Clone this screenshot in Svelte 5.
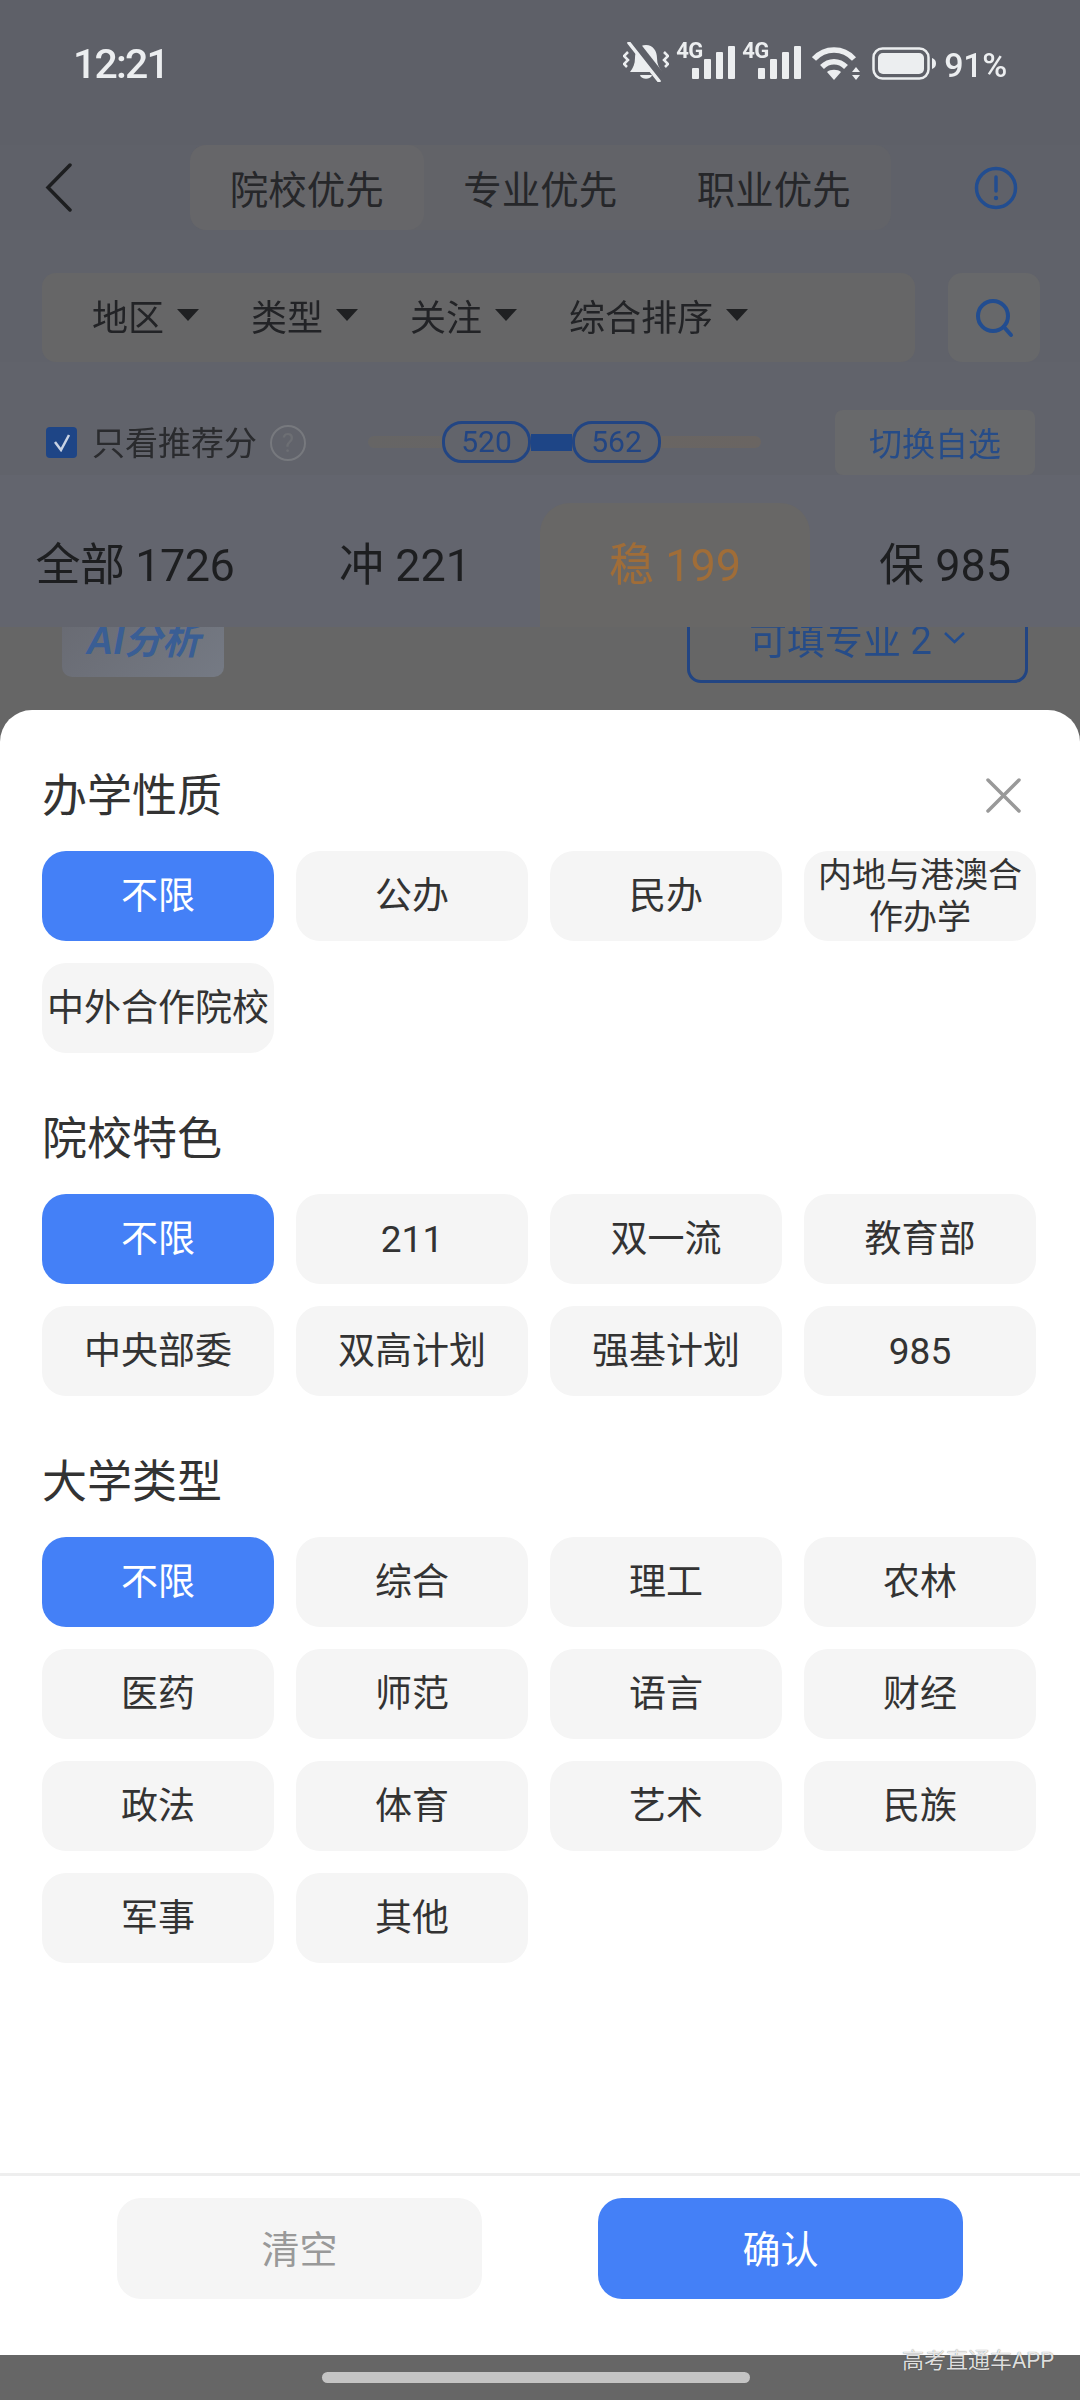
<script>
  const groups = [
    { title: '办学性质', items: ['不限', '公办', '民办', '内地与港澳合作办学', '中外合作院校'] },
    { title: '院校特色', items: ['不限', '211', '双一流', '教育部', '中央部委', '双高计划', '强基计划', '985'] },
    { title: '大学类型', items: ['不限', '综合', '理工', '农林', '医药', '师范', '语言', '财经', '政法', '体育', '艺术', '民族', '军事', '其他'] }
  ];
  const filters = ['地区', '类型', '关注', '综合排序'];
  const modes = ['院校优先', '专业优先', '职业优先'];
  const levels = [
    { label: '全部 1726' },
    { label: '冲 221' },
    { label: '稳 199', active: true },
    { label: '保 985' }
  ];
</script>

<div class="page">
  <div class="behind">
    <div class="status">
      <span class="time">12:21</span>
      <div class="status-icons">
        <svg width="46" height="40" viewBox="0 0 46 40" class="bell">
          <path d="M23 3c-7 0-11 6-11 13 0 6-2 10-5 14h32c-3-4-5-8-5-14 0-7-4-13-11-13z" fill="#eceef0" />
          <path d="M17 33h12c-1 5-11 5-12 0z" fill="#eceef0" />
          <path d="M11 0l29 37" stroke="#5e6068" stroke-width="8" />
          <path d="M6 1l30 38" stroke="#eceef0" stroke-width="3.500" stroke-linecap="round" />
          <path d="M5 10l-4 4 4 4-4 4 3 3M41 10l4 4-4 4 4 4-3 3" stroke="#eceef0" stroke-width="2.500" fill="none" />
        </svg>
        {#each [0, 1] as n}
          <div class="signal">
            <span class="net">4G</span>
            <svg width="43" height="33" viewBox="0 0 43 33" fill="#eceef0">
              <rect x="0" y="22" width="7" height="11" rx="1" />
              <rect x="12" y="13" width="7" height="20" rx="1" />
              <rect x="24" y="6" width="7" height="27" rx="1" />
              <rect x="36" y="0" width="7" height="33" rx="1" />
            </svg>
          </div>
        {/each}
        <svg width="50" height="33" viewBox="0 0 50 33" class="wifi" fill="none" stroke="#eceef0" stroke-width="5.500">
          <path d="M2 12c11-12 29-12 40 0" />
          <path d="M10 20c7-7 17-7 24 0" />
          <path d="M15 25l7 8 7-8c-3-3-11-3-14 0z" fill="#eceef0" stroke="none" />
          <path d="M44 20l4 5h-8zM44 33l4-5h-8z" fill="#eceef0" stroke="none" />
        </svg>
        <svg width="64" height="33" viewBox="0 0 64 33" class="battery">
          <rect x="1.500" y="1.500" width="55" height="30" rx="9" fill="none" stroke="#eceef0" stroke-width="2.500" />
          <rect x="6" y="6" width="46" height="21" rx="5" fill="#eceef0" />
          <path d="M60 11c3 1 4 3 4 5.500s-1 4.500-4 5.500z" fill="#eceef0" />
        </svg>
        <span class="pct">91%</span>
      </div>
    </div>

    <div class="nav">
      <svg width="27" height="49" viewBox="0 0 27 49" fill="none" stroke="#1d1e20" stroke-width="3.500" stroke-linecap="round" class="back">
        <path d="M25 2L3 24.500 25 47" />
      </svg>
      <div class="modes">
        {#each modes as m, i}
          <span class="mode" class:on={i === 0}>{m}</span>
        {/each}
      </div>
      <svg width="44" height="44" viewBox="0 0 44 44" class="info">
        <circle cx="22" cy="22" r="19.500" fill="none" stroke="#224d90" stroke-width="3.500" />
        <path d="M22 11v14" stroke="#224d90" stroke-width="3.500" stroke-linecap="round" />
        <circle cx="22" cy="32" r="2.200" fill="#224d90" />
      </svg>
    </div>

    <div class="filters">
      <div class="filter-bar">
        {#each filters as f}
          <span class="filter">{f}<i class="caret"></i></span>
        {/each}
      </div>
      <div class="search">
        <svg width="40" height="42" viewBox="0 0 40 42" fill="none" stroke="#224d90" stroke-width="4" stroke-linecap="round">
          <circle cx="19" cy="19" r="15" />
          <path d="M30 30l7 8" />
        </svg>
      </div>
    </div>

    <div class="score-row">
      <span class="check">
        <svg width="20" height="18" viewBox="0 0 20 18" fill="none" stroke="#c9d3e4" stroke-width="2.500"><path d="M3 8l6 8 8-15" /></svg>
      </span>
      <span class="only">只看推荐分</span>
      <span class="help">?</span>
      <div class="slider">
        <span class="thumb">520</span>
        <span class="between"></span>
        <span class="thumb">562</span>
      </div>
      <span class="switch">切换自选</span>
    </div>

    <div class="levels">
      {#each levels as l}
        <span class="level" class:active={l.active}>{l.label}</span>
      {/each}
    </div>

    <div class="peek">
      <span class="ai">AI分析</span>
      <span class="majors">可填专业 2
        <svg width="23" height="13" viewBox="0 0 23 13" fill="none" stroke="#224d90" stroke-width="2.500"><path d="M2 2l9.500 9 9.500-9" /></svg>
      </span>
    </div>
  </div>

  <div class="sheet">
    <svg width="35" height="35" viewBox="0 0 35 35" class="close" stroke="#999" stroke-width="3.500" stroke-linecap="round">
      <path d="M2 2l31 31M33 2L2 33" />
    </svg>
    <div class="groups">
      {#each groups as g}
        <section>
          <h2>{g.title}</h2>
          <div class="chips">
            {#each g.items as item, i}
              <span class="chip" class:sel={i === 0} class:small={item.length > 6}>{item}</span>
            {/each}
          </div>
        </section>
      {/each}
    </div>
    <div class="actions">
      <span class="btn clear">清空</span>
      <span class="btn ok">确认</span>
    </div>
  </div>

  <div class="home"><span class="handle"></span></div>
  <span class="mark">高考直通车APP</span>
</div>

<style>
  :global(body) {
    margin: 0;
    background: #666;
  }

  .page {
    position: relative;
    width: 1080px;
    height: 2400px;
    overflow: hidden;
    font-family: "Noto Sans CJK SC", "Noto Sans", sans-serif;
    background: #666;
  }

  .behind {
    filter: blur(0.5px);
    color: #1d1e20;
  }

  .status {
    height: 145px;
    box-sizing: border-box;
    padding: 39px 73px 0 73px;
    display: flex;
    justify-content: space-between;
    align-items: flex-start;
    background: #5e6068;
    color: #eceef0;
  }

  .time {
    font-family: Roboto, sans-serif;
    font-size: 41px;
    font-weight: 500;
    line-height: 50px;
    letter-spacing: -1.800px;
  }

  .status-icons {
    display: flex;
    align-items: flex-end;
    height: 41px;
  }

  .signal {
    position: relative;
    width: 59px;
    height: 36px;
    margin-left: 7px;
    display: flex;
    justify-content: flex-end;
    align-items: flex-end;
  }

  .signal svg {
    margin-bottom: 1px;
  }

  .net {
    position: absolute;
    left: 0;
    top: -2px;
    font-family: Roboto, sans-serif;
    font-size: 22px;
    font-weight: 700;
    line-height: 17px;
    letter-spacing: -0.5px;
  }

  .bell {
    margin-bottom: -2px;
  }

  .wifi {
    margin-left: 11px;
  }

  .battery {
    margin-left: 10px;
  }

  .pct {
    margin-left: 8px;
    margin-bottom: -5px;
    font-family: Roboto, sans-serif;
    font-size: 34px;
    font-weight: 500;
    line-height: 40px;
    letter-spacing: -0.3px;
  }

  .nav {
    height: 85px;
    display: flex;
    align-items: center;
    background: #5f6169;
    position: relative;
    padding-left: 45px;
  }

  .back {
    margin-right: 118px;
  }

  .modes {
    display: flex;
    background: #626368;
    border-radius: 16px;
  }

  .mode {
    width: 233.500px;
    height: 85px;
    font-size: 38.500px;
    line-height: 85px;
    text-align: center;
    border-radius: 16px;
    color: #26272a;
  }

  .mode.on {
    background: #666669;
  }

  .info {
    margin-left: 83px;
  }

  .filters {
    display: flex;
    padding: 43px 40px 0 42px;
    height: 89px;
    background: #60626a;
    justify-content: space-between;
  }

  .filter-bar {
    width: 873px;
    height: 89px;
    background: #666667;
    border-radius: 14px;
    display: flex;
    align-items: center;
    padding: 0 0 5px 50px;
    box-sizing: border-box;
  }

  .filter {
    font-size: 36px;
    display: flex;
    align-items: center;
    margin-right: 52px;
    color: #222326;
  }

  .caret {
    width: 0;
    height: 0;
    margin-left: 13px;
    border-left: 11px solid transparent;
    border-right: 11px solid transparent;
    border-top: 12px solid #1f2022;
  }

  .search {
    width: 92px;
    height: 89px;
    background: #67686a;
    border-radius: 14px;
    display: flex;
    align-items: center;
    justify-content: center;
  }

  .score-row {
    height: 113px;
    box-sizing: border-box;
    padding: 48px 43px 0 46px;
    display: flex;
    align-items: flex-start;
    background: #61636b;
    position: relative;
  }

  .check {
    width: 31px;
    height: 31px;
    margin-top: 17px;
    border-radius: 4px;
    background: #1e4586;
    display: flex;
    align-items: center;
    justify-content: center;
  }

  .only {
    margin-left: 15px;
    font-size: 33px;
    line-height: 63px;
    color: #2a2b2e;
  }

  .help {
    margin: 15px 0 0 13px;
    width: 32px;
    height: 32px;
    border: 2px solid #77797e;
    border-radius: 50%;
    font-family: Roboto, sans-serif;
    font-size: 26px;
    line-height: 32px;
    text-align: center;
    color: #6d6f74;
  }

  .slider {
    width: 393px;
    margin-left: 62px;
    height: 12px;
    margin-top: 26px;
    background: linear-gradient(90deg, #666565, #6a6562);
    border-radius: 6px;
    position: relative;
    display: flex;
    justify-content: flex-start;
    align-items: center;
  }

  .thumb {
    position: relative;
    z-index: 1;
    width: 83px;
    height: 36px;
    border: 3px solid #224583;
    border-radius: 20px;
    background: #62646b;
    font-family: Roboto, sans-serif;
    font-size: 30px;
    line-height: 36px;
    text-align: center;
    color: #224583;
    flex: none;
  }

  .slider .thumb:first-child {
    margin-left: 74px;
  }

  .between {
    width: 41px;
    height: 17px;
    background: #1e4586;
    flex: none;
  }

  .switch {
    margin-left: 74px;
    width: 200px;
    height: 65px;
    background: #68696b;
    border-radius: 8px;
    font-size: 33px;
    line-height: 65px;
    text-align: center;
    color: #264c88;
  }

  .levels {
    height: 152px;
    box-sizing: border-box;
    padding: 28px 0 0 0;
    display: flex;
    background: #63656e;
    overflow: hidden;
  }

  .level {
    width: 270px;
    height: 124px;
    font-size: 45px;
    line-height: 126px;
    text-align: center;
    color: #1d1e20;
    flex: none;
    font-family: Roboto, "Noto Sans CJK SC", sans-serif;
  }

  .level:first-child {
    letter-spacing: -0.5px;
  }

  .level.active {
    background: #686766;
    border-radius: 30px 30px 0 0;
    color: #a06d38;
  }

  .peek {
    position: relative;
    height: 82px;
    overflow: hidden;
    background: #666;
  }

  .ai {
    position: absolute;
    left: 62px;
    top: -18px;
    width: 162px;
    height: 68px;
    border-radius: 10px;
    background: linear-gradient(135deg, #686a72, #757a84);
    font-family: "Liberation Sans", "Noto Sans CJK SC", sans-serif;
    font-weight: 700;
    font-style: italic;
    font-size: 38px;
    line-height: 64px;
    text-align: center;
    color: #3a5e94;
  }

  .majors {
    position: absolute;
    left: 687px;
    top: -30px;
    width: 341px;
    height: 86px;
    box-sizing: border-box;
    border: 3px solid #224583;
    border-radius: 14px;
    padding-bottom: 5px;
    display: flex;
    align-items: center;
    justify-content: center;
    gap: 11px;
    font-size: 38px;
    color: #264c88;
    font-family: Roboto, "Noto Sans CJK SC", sans-serif;
  }

  .sheet {
    position: absolute;
    left: 0;
    right: 0;
    top: 710px;
    height: 1645px;
    background: #fff;
    border-radius: 32px 32px 0 0;
    display: flex;
    flex-direction: column;
    box-sizing: border-box;
    padding-top: 53px;
  }

  .close {
    position: absolute;
    top: 68px;
    right: 59px;
  }

  .groups {
    padding: 0 44px 0 42px;
    display: flex;
    flex-direction: column;
    gap: 53px;
  }

  h2 {
    margin: 0 0 28px;
    font-size: 45px;
    font-weight: 400;
    line-height: 60px;
    color: #333;
  }

  .chips {
    display: grid;
    grid-template-columns: repeat(4, 1fr);
    gap: 22px;
  }

  .chip {
    height: 90px;
    box-sizing: border-box;
    padding: 2px 4px 0;
    border-radius: 24px;
    background: #f5f5f5;
    display: flex;
    align-items: center;
    justify-content: center;
    text-align: center;
    font-size: 37px;
    line-height: 44px;
    color: #333;
    font-family: Roboto, "Noto Sans CJK SC", sans-serif;
  }

  .chip.small {
    font-size: 34px;
    line-height: 42px;
    padding: 0;
  }

  .chip.sel {
    background: #4480f7;
    color: #fff;
  }

  .actions {
    margin-top: auto;
    height: 182px;
    box-sizing: border-box;
    border-top: 3px solid #eee;
    padding-top: 22px;
    display: flex;
    justify-content: center;
    gap: 116px;
  }

  .btn {
    width: 365px;
    height: 101px;
    border-radius: 24px;
    font-size: 38px;
    line-height: 98px;
    text-align: center;
  }

  .clear {
    background: #f5f5f5;
    color: #999;
  }

  .ok {
    background: #4480f7;
    color: #fff;
  }

  .home {
    position: absolute;
    left: 0;
    right: 0;
    bottom: 0;
    height: 45px;
    background: #666;
    display: flex;
    justify-content: center;
  }

  .handle {
    margin: 17px 8px 0 0;
    width: 428px;
    height: 11px;
    border-radius: 6px;
    background: #c4c4c4;
  }

  .mark {
    position: absolute;
    left: 902px;
    top: 2346px;
    font-size: 22px;
    line-height: 30px;
    color: rgba(255, 255, 255, 0.85);
    text-shadow: 0 0 1px rgba(0, 0, 0, 0.6);
    font-family: Roboto, "Noto Sans CJK SC", sans-serif;
  }
</style>
